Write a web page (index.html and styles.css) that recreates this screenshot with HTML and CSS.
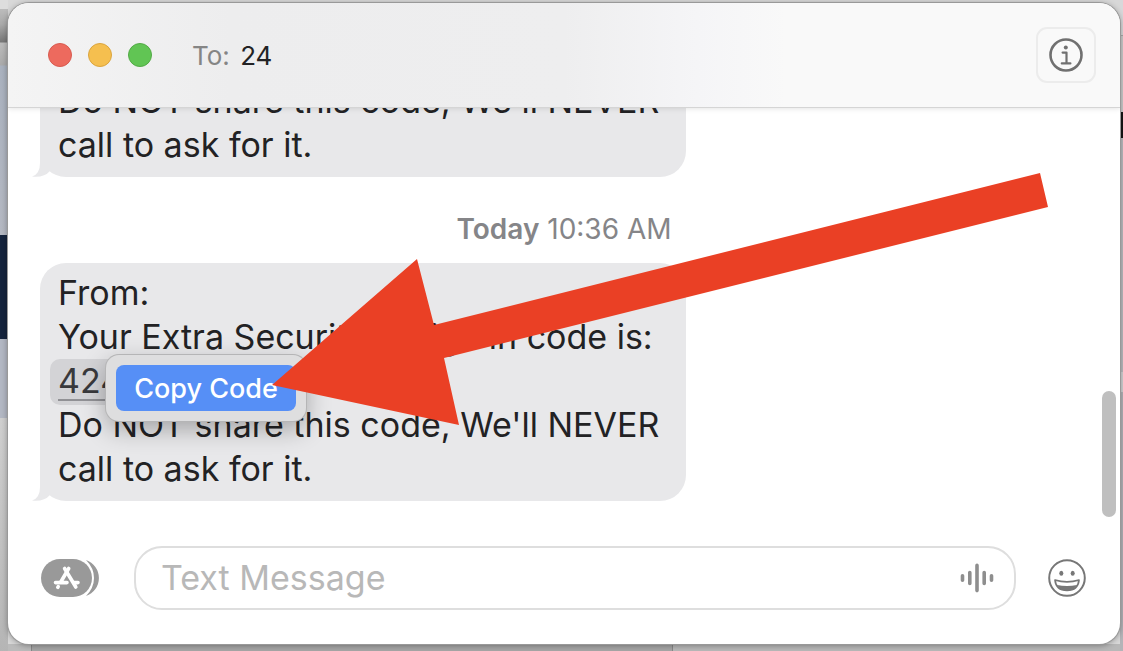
FILE: index.html
```html
<!DOCTYPE html>
<html lang="en">
<head>
    <meta charset="UTF-8">
    <title>Messages</title>
    <link rel="stylesheet" href="styles.css">
</head>
<body>

    <main class="window">
        <header class="titlebar">
            <div class="lights">
                <button class="light close" aria-label="Close"></button>
                <button class="light minimize" aria-label="Minimize"></button>
                <button class="light zoom" aria-label="Zoom"></button>
            </div>
            <div class="recipient"><span class="to">To:</span> 24</div>
            <button class="info" aria-label="Details">
                <svg width="34" height="34" viewBox="0 0 34 34" fill="none" stroke="#707070">
                    <circle cx="17" cy="17" r="15.5" stroke-width="2.6"/>
                    <circle cx="16.8" cy="9.4" r="2" fill="#707070" stroke="none"/>
                    <path d="M13.6 14.6h3.9v10.6M12.8 25.4h8.6" stroke-width="2.2" stroke-linecap="round" stroke-linejoin="round"/>
                </svg>
            </button>
        </header>

        <section class="messages">
            <div class="bubble">
                <p>Do NOT share this code, We'll NEVER call to ask for it.</p>
                <svg class="tail" width="24" height="26" viewBox="0 0 24 26"><path d="M8 0V12Q8 23 0 25.6Q12 27 18 20L24 0Z" fill="#e8e8ea"/></svg>
            </div>

            <div class="date"><b>Today</b> 10:36 AM</div>

            <div class="bubble">
                <p>From:</p>
                <p>Your Extra Security &amp; Sign in code is:</p>
                <div class="code-line">
                    <a class="code" href="#">424</a>
                    <div class="popover">
                        <button class="copy">Copy Code</button>
                    </div>
                </div>
                <p>Do NOT share this code, We'll NEVER call to ask for it.</p>
                <svg class="tail" width="24" height="26" viewBox="0 0 24 26"><path d="M8 0V12Q8 23 0 25.6Q12 27 18 20L24 0Z" fill="#e8e8ea"/></svg>
            </div>
        </section>

        <form class="composer">
            <button class="apps" type="button" aria-label="Apps">
                <svg width="58" height="38" viewBox="0 0 58 38">
                    <path d="M45 1a19 19 0 0 1 0 36Q53 29 53 19T45 1Z" fill="#999"/>
                    <rect width="51" height="38" rx="19" fill="#999"/>
                    <g stroke="#fff" stroke-width="3.6" stroke-linecap="round" fill="none">
                        <path d="M27.7 9.5 19.8 23"/>
                        <path d="M23.6 9.5 34.8 28"/>
                        <path d="M14.5 23.6H26M33 23.6H37"/>
                        <path d="M17.2 27.6 16.8 28.3"/>
                    </g>
                </svg>
            </button>
            <div class="field">
                <input type="text" placeholder="Text Message" aria-label="Text Message">
                <button class="voice" type="button" aria-label="Record audio">
                    <svg width="34" height="30" viewBox="0 0 34 30" stroke="#8e8e8e" stroke-width="3.6" stroke-linecap="round">
                        <path d="M2.5 12.8v4.4M9.8 9.5v11M17 2.4v25.2M24.2 9.5v11M31.5 12.8v4.4"/>
                    </svg>
                </button>
            </div>
            <button class="emoji" type="button" aria-label="Emoji">
                <svg width="38" height="38" viewBox="0 0 38 38" fill="none" stroke="#777" stroke-width="2">
                    <circle cx="19" cy="19" r="17.8"/>
                    <ellipse cx="13.3" cy="14.3" rx="2" ry="2.5" fill="#777" stroke="none"/>
                    <ellipse cx="24.7" cy="14.3" rx="2" ry="2.5" fill="#777" stroke="none"/>
                    <path d="M7 21Q19 24.6 31 21Q30 31.5 19 31.5T7 21Z" stroke-width="1.7" stroke-linejoin="round"/>
                    <path d="M9 26Q19 28 29 26Q26 31.5 19 31.5T9 26Z" fill="#777" stroke="none"/>
                </svg>
            </button>
        </form>

        <div class="scrollbar"></div>
    </main>

    <svg class="arrow" width="776" height="254" viewBox="0 0 776 254">
        <polygon points="0,212 145,86 162,152 768,0 776,34 172,185 187,252" fill="#ea4025"/>
    </svg>

</body>
</html>
```
FILE: styles.css
```css
* {
    box-sizing: border-box;
}

body {
    display: flex;
    position: relative;
    min-height: 100vh;
    margin: 0;
    padding: 3px 3px 8px 8px;
    overflow: hidden;
    font-family: Inter, "Liberation Sans", sans-serif;
    color: #222224;
    background:
        linear-gradient(#d8d8da 0 35px, #aaa 35px 36px, #ccc 36px 112px, #151515 112px 138px, #bcbcc0 138px 372px, #d2d2d4 372px 392px, #b4b4b8 392px) right / 3px 100% no-repeat,
        linear-gradient(#ddd 0 9px, #bbb 9px 10px, #aaa 24px, #777 42px, #bbb 43px, #aaa 65px, #a9b1be 66px, #b4b8c2 235px, #15243d 235px 339px, #b2b7c3 339px 418px, #cfcfcf 418px, #b5b5b5) left / 8px 100% no-repeat,
        linear-gradient(90deg, #bbb 0 31px, #888 31px 32px, #a6a6a6 32px 672px, #888 672px 673px, #b8b8b8 673px) bottom / 100% 8px no-repeat,
        #d8d8d8;
}

button {
    padding: 0;
    border: none;
    background: none;
    font-family: inherit;
}

svg {
    display: block;
}

.window {
    display: flex;
    flex-direction: column;
    flex: 1;
    position: relative;
    min-width: 0;
    border-radius: 21px;
    overflow: hidden;
    background: #fff;
    box-shadow: 0 0 0 1px #999, 0 1px 6px rgba(0, 0, 0, 0.4);
}

.titlebar {
    display: flex;
    align-items: center;
    flex-shrink: 0;
    position: relative;
    z-index: 1;
    height: 105px;
    padding: 0 24px 0 40px;
    border-bottom: 1px solid #d5d5d5;
    background: linear-gradient(90deg, #f4f4f4, #ededee 20%, #eeeeef 50%, #f5f5f7 62%, #f9f9f9 70%);
    box-shadow: 0 1px 5px rgba(0, 0, 0, 0.1);
}

.lights {
    display: flex;
    gap: 16px;
}

.light {
    width: 24px;
    height: 24px;
    border: 1px solid #d85b50;
    border-radius: 50%;
    background: #ed6a5e;
}

.minimize {
    border-color: #dba53e;
    background: #f5bf4f;
}

.zoom {
    border-color: #53aa46;
    background: #61c554;
}

.recipient {
    flex: 1;
    margin-left: 40px;
    font-size: 26px;
}

.to {
    margin-right: 3px;
    color: #858585;
}

.info {
    display: grid;
    place-items: center;
    width: 60px;
    height: 56px;
    border: 2px solid #ececec;
    border-radius: 11px;
}

.messages {
    display: flex;
    flex-direction: column;
    justify-content: flex-end;
    flex: 1;
    min-height: 0;
    padding: 0 32px;
    margin-top: -37px;
}

.bubble {
    position: relative;
    width: 58%;
    min-width: 646px;
    padding: 8px 18px 10px;
    border-radius: 26px;
    font-size: 34px;
    line-height: 44px;
    background: #e8e8ea;
}

.bubble p {
    margin: 0;
}

.tail {
    position: absolute;
    left: -8px;
    bottom: 0;
}

.date {
    padding: 34px 0 16px;
    font-size: 28px;
    line-height: 36px;
    text-align: center;
    color: #858588;
}

.date b {
    font-weight: 600;
}

.code-line {
    position: relative;
    height: 44px;
}

.code {
    display: inline-block;
    height: 46px;
    margin-left: -8px;
    padding: 0 8px;
    border-radius: 10px;
    color: #39393c;
    background: #d3d3d6;
    text-decoration: underline #919195 2px;
    text-underline-offset: 6px;
}

.popover {
    position: absolute;
    left: 48px;
    top: -4px;
    padding: 10px;
    border-radius: 13px;
    background: #dededf;
    box-shadow: 0 0 0 1px #b5b5b6, 0 8px 24px rgba(0, 0, 0, 0.3);
    z-index: 1;
}

.copy {
    display: block;
    width: 180px;
    height: 46px;
    border-radius: 8px;
    font-size: 27px;
    font-weight: 500;
    white-space: nowrap;
    color: #fff;
    background: #568ff6;
}

.composer {
    display: flex;
    align-items: center;
    flex-shrink: 0;
    padding: 45px 34px 34px 33px;
}

.field {
    display: flex;
    align-items: center;
    flex: 1;
    height: 64px;
    margin: 0 32px 0 35px;
    padding: 0 20px 0 25px;
    border: 2px solid #dedede;
    border-radius: 28px;
}

.field input {
    flex: 1;
    min-width: 0;
    padding: 0 0 2px;
    border: none;
    outline: none;
    font-family: inherit;
    font-size: 34px;
    background: none;
}

.field input::placeholder {
    color: #b8b8b8;
}

.scrollbar {
    position: absolute;
    right: 4px;
    bottom: 127px;
    width: 14px;
    height: 126px;
    border-radius: 7px;
    background: #bfbfbf;
}

.arrow {
    position: absolute;
    left: 272px;
    top: 173px;
    z-index: 2;
}
```
